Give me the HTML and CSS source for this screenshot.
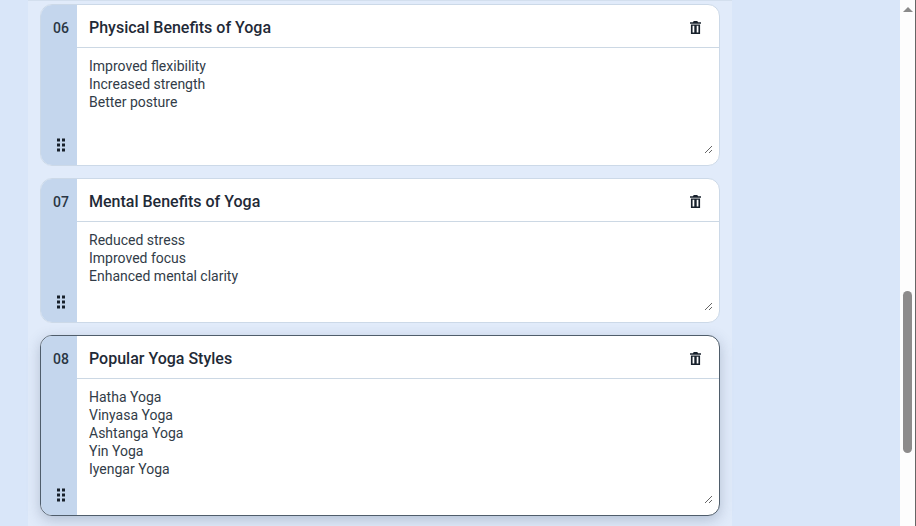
FILE: index.html
```html
<!DOCTYPE html>
<html lang="en">
<head>
<meta charset="utf-8">
<title>Yoga outline</title>
<link rel="stylesheet" href="styles.css">
</head>
<body>
<div class="page">
  <main class="main">
    <div class="column">
      <section class="card">
        <div class="rail">
          <span class="num">06</span>
          <svg class="grip" viewBox="0 0 10 14"><path d="M1 .5h3v3H1zM6 .5h3v3H6zM1 5.500h3v3H1zM6 5.500h3v3H6zM1 10.500h3v3H1zM6 10.500h3v3H6z"/></svg>
        </div>
        <div class="body">
          <header class="head">
            <h2 class="title">Physical Benefits of Yoga</h2>
            <svg class="trash" viewBox="0 0 12 14"><path fill-rule="evenodd" d="M4 0h4l.7 1.200H12v1.600H0V1.200h3.300zM1 3.600h10V14H1zM2.800 5v7.400h1.900V5zM7.300 5v7.400h1.900V5z"/></svg>
          </header>
          <div class="wrap"><textarea class="text h106" spellcheck="false">Improved flexibility
Increased strength
Better posture</textarea></div>
        </div>
      </section>
      <section class="card">
        <div class="rail">
          <span class="num">07</span>
          <svg class="grip" viewBox="0 0 10 14"><path d="M1 .5h3v3H1zM6 .5h3v3H6zM1 5.500h3v3H1zM6 5.500h3v3H6zM1 10.500h3v3H1zM6 10.500h3v3H6z"/></svg>
        </div>
        <div class="body">
          <header class="head">
            <h2 class="title">Mental Benefits of Yoga</h2>
            <svg class="trash" viewBox="0 0 12 14"><path fill-rule="evenodd" d="M4 0h4l.7 1.200H12v1.600H0V1.200h3.300zM1 3.600h10V14H1zM2.800 5v7.400h1.900V5zM7.300 5v7.400h1.900V5z"/></svg>
          </header>
          <div class="wrap"><textarea class="text h89" spellcheck="false">Reduced stress
Improved focus
Enhanced mental clarity</textarea></div>
        </div>
      </section>
      <section class="card active">
        <div class="rail">
          <span class="num">08</span>
          <svg class="grip" viewBox="0 0 10 14"><path d="M1 .5h3v3H1zM6 .5h3v3H6zM1 5.500h3v3H1zM6 5.500h3v3H6zM1 10.500h3v3H1zM6 10.500h3v3H6z"/></svg>
        </div>
        <div class="body">
          <header class="head">
            <h2 class="title">Popular Yoga Styles</h2>
            <svg class="trash" viewBox="0 0 12 14"><path fill-rule="evenodd" d="M4 0h4l.7 1.200H12v1.600H0V1.200h3.300zM1 3.600h10V14H1zM2.800 5v7.400h1.900V5zM7.300 5v7.400h1.900V5z"/></svg>
          </header>
          <div class="wrap"><textarea class="text h125" spellcheck="false">Hatha Yoga
Vinyasa Yoga
Ashtanga Yoga
Yin Yoga
Iyengar Yoga</textarea></div>
        </div>
      </section>
    </div>
  </main>
  <aside class="scrollbar">
    <span class="arrow"></span>
    <span class="thumb"></span>
  </aside>
</div>
</body>
</html>
```
FILE: styles.css
```css
* { box-sizing: border-box; }
html, body { margin: 0; height: 100%; overflow: hidden; }
body { font-family: Roboto, "Liberation Sans", sans-serif; background: #d9e6f9; color: #1f2933; }
.page { display: flex; height: 526px; width: 916px; }
.main { flex: 1; min-width: 0; padding-left: 28px; }
.column {
  width: 704px; height: 526px; background: #e1ebfa;
  padding: 3px 12px 0; display: flex; flex-direction: column; gap: 12px;
  border-top: 1px solid #d3dfee;
}
.card {
  display: flex; width: 680px; background: #fff; flex: none;
  border: 1px solid #ccd9e8; border-radius: 12px; overflow: hidden;
}
.card.active { border-color: #4f5d6b; box-shadow: 0 4px 14px rgba(60, 80, 110, .28); }
.rail {
  width: 36px; flex: none; background: #c4d6ed;
  display: flex; flex-direction: column; align-items: center; justify-content: space-between;
  padding: 15px 0 13px 4px;
}
.num { font-size: 14px; font-weight: 500; line-height: 17px; color: #2a3644; }
.grip { width: 10px; height: 14px; fill: #17202b; display: block; }
.body { flex: 1; min-width: 0; display: flex; flex-direction: column; }
.head {
  height: 43px; flex: none; display: flex; align-items: center; justify-content: space-between;
  padding: 4px 18px 0 12px; border-bottom: 1px solid #ccd8e4;
}
.title { margin: 0; font-size: 16px; font-weight: 500; line-height: 20px; color: #1f2a37; }
.trash { width: 11px; height: 13px; fill: #17202b; display: block; margin-bottom: 2px; }
.wrap { display: flex; padding: 0 6px 11px 0; }
.text {
  display: block; width: 100%; border: 0; outline: 0; margin: 0; background: transparent;
  padding: 9px 12px; font: 400 14px/18px Roboto, "Liberation Sans", sans-serif; color: #323c48;
}
.h106 { height: 106px; }
.h89 { height: 89px; }
.h125 { height: 125px; }
.scrollbar {
  width: 16px; flex: none; background: #fdfdfd; display: flex; flex-direction: column; align-items: center;
  padding: 7px 0 0; border-right: 1px solid #666;
}
.arrow { width: 0; height: 0; flex: none; border: 5px solid transparent; border-top: 0; border-bottom: 5px solid #8a8a8a; }
.thumb { width: 9px; height: 162px; flex: none; margin-top: 279px; border-radius: 5px; background: #8d8b8b; }
```
